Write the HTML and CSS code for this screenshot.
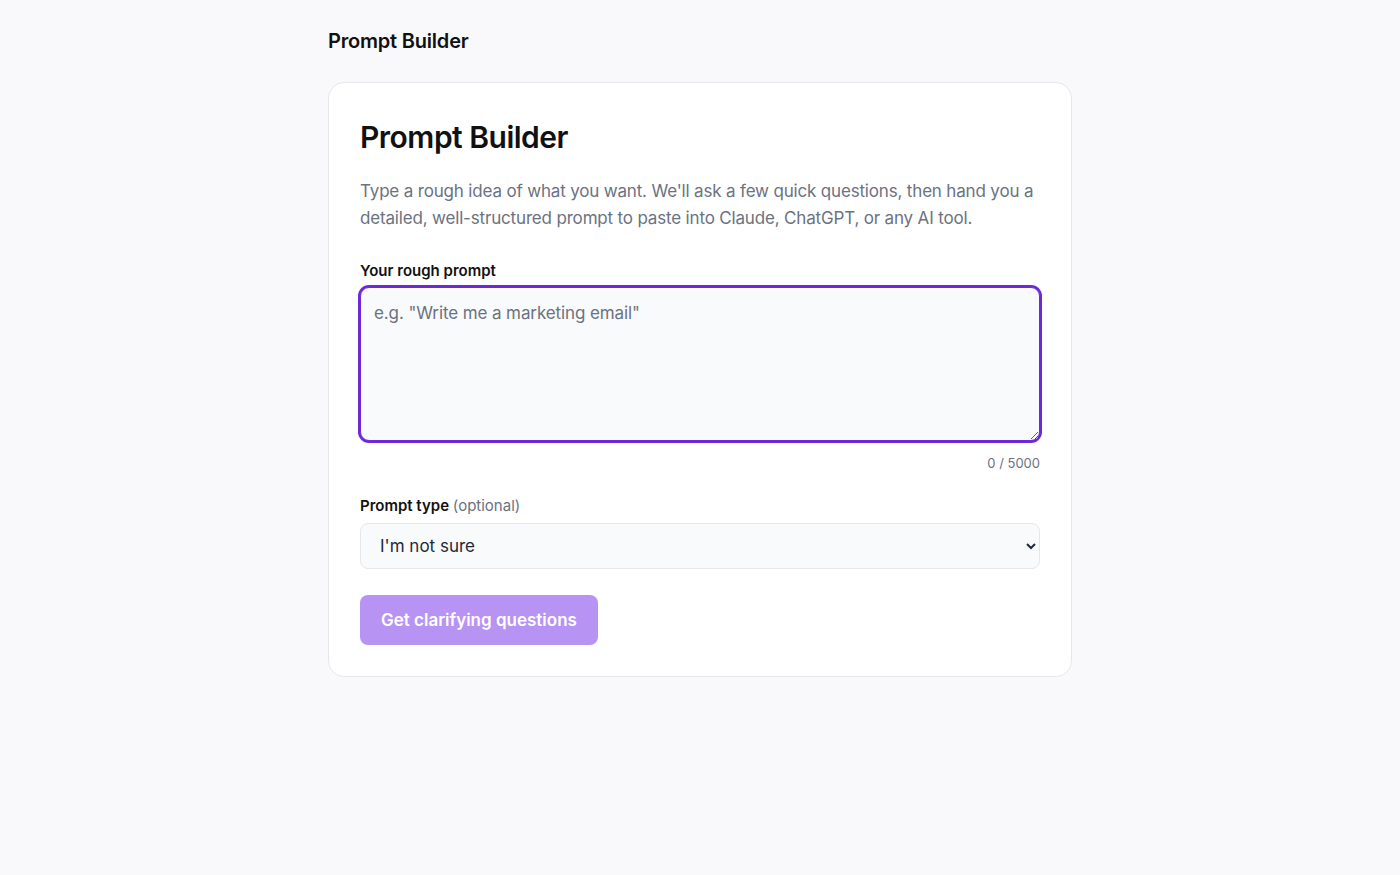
FILE: index.html
```html
<!DOCTYPE html>
<html lang="en">
<head>
<meta charset="utf-8">
<title>Prompt Builder</title>
<link rel="stylesheet" href="styles.css">
</head>
<body>
<div class="page">
  <header class="topbar">Prompt Builder</header>
  <main class="card">
    <h1 class="title">Prompt Builder</h1>
    <p class="intro">Type a rough idea of what you want. We'll ask a few quick questions, then hand you a detailed, well-structured prompt to paste into Claude, ChatGPT, or any AI tool.</p>
    <label class="label" for="rough">Your rough prompt</label>
    <textarea id="rough" class="prompt-input" placeholder="e.g. &quot;Write me a marketing email&quot;" autofocus></textarea>
    <div class="counter">0 / 5000</div>
    <label class="label label-type" for="ptype">Prompt type <span class="optional">(optional)</span></label>
    <select id="ptype" class="select">
      <option>I'm not sure</option>
      <option>Writing</option>
      <option>Coding</option>
      <option>Analysis</option>
    </select>
    <button class="submit" type="button">Get clarifying questions</button>
  </main>
</div>
</body>
</html>
```
FILE: styles.css
```css
* { box-sizing: border-box; }
html, body { margin: 0; padding: 0; }
body {
  background: #f9f9fb;
  font-family: Inter, "Noto Sans", "Liberation Sans", sans-serif;
  color: #111827;
}
.page {
  width: 744px;
  margin: 0 auto;
  padding-top: 27px;
}
.topbar {
  font-size: 20px;
  font-weight: 600;
  line-height: 28px;
  color: #111;
  letter-spacing: -0.2px;
}
.card {
  margin-top: 27px;
  background: #fff;
  border: 1px solid #e5e7eb;
  border-radius: 16px;
  padding: 33px 31px 31px;
  display: flex;
  flex-direction: column;
  align-items: stretch;
}
.title {
  margin: 0;
  font-size: 30px;
  line-height: 42px;
  font-weight: 600;
  letter-spacing: -0.5px;
  color: #111;
}
.intro {
  margin: 20px 0 0;
  font-size: 17px;
  line-height: 27px;
  letter-spacing: -0.17px;
  color: #6b7280;
}
.label {
  margin-top: 29px;
  font-size: 15px;
  line-height: 20px;
  font-weight: 600;
  color: #111;
}
.prompt-input {
  display: block;
  margin-top: 6px;
  width: 100%;
  height: 154px;
  padding: 12px 13px;
  font-family: inherit;
  font-size: 17px;
  line-height: 27px;
  letter-spacing: -0.1px;
  color: #111827;
  background: #f9fafb;
  border: 1px solid #6d28d9;
  box-shadow: 0 0 0 2px #6d28d9;
  border-radius: 9px;
  outline: none;
  resize: vertical;
}
.prompt-input::placeholder { color: #6b7280; }
.counter {
  margin-top: 13px;
  text-align: right;
  font-size: 13px;
  line-height: 18px;
  color: #6b7280;
}
.label-type { margin-top: 24px; }
.optional { font-weight: 400; color: #6b7280; }
.select {
  margin-top: 7px;
  width: 100%;
  height: 46px;
  padding: 0 8px 0 15px;
  font-family: inherit;
  font-size: 17px;
  color: #1f2937;
  background: #f9fafb;
  border: 1px solid #e5e7eb;
  border-radius: 8px;
  outline: none;
}
.submit {
  margin-top: 26px;
  align-self: flex-start;
  height: 50px;
  padding: 0 21px;
  font-family: inherit;
  font-size: 17px;
  font-weight: 600;
  color: #fff;
  background: #b794f4;
  border: none;
  border-radius: 8px;
  cursor: not-allowed;
}
```
